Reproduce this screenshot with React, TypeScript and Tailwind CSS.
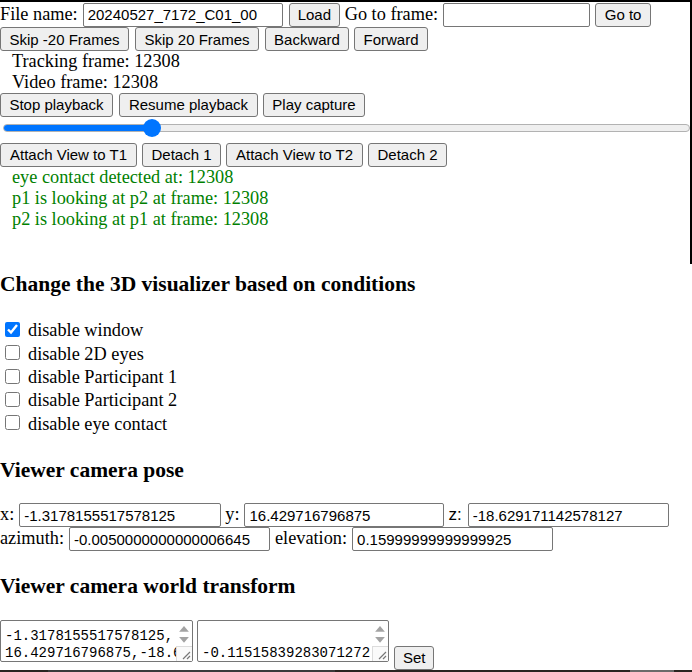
import React from 'react';

const serif = "font-['Liberation_Serif','Times_New_Roman',serif]";
const sans = "font-['Liberation_Sans',Arial,sans-serif]";
const btn = `h-[24px] px-[8px] bg-[#efefef] border border-[#767676] rounded-[3px] text-[15px] leading-none text-black whitespace-nowrap ${sans}`;
const field = `h-[24px] border border-[#767676] rounded-[2px] px-[4px] text-[15px] text-black bg-white outline-none ${sans}`;

function FakeTextarea({ value, width }: { value: string; width: string }) {
  return (
    <div className={`flex h-[42px] border border-[#767676] rounded-[2px] bg-white ${width}`}>
      <textarea
        readOnly
        value={value}
        wrap="off"
        className="flex-1 min-w-0 resize-none overflow-hidden border-0 outline-none pl-[4px] pt-[7px] text-[14px] leading-[17px] text-black font-['Liberation_Mono','DejaVu_Sans_Mono',monospace]"
      />
      <div className="w-[16px] flex flex-col items-center">
        <svg width="16" height="12" viewBox="0 0 16 12" className="mt-[2px]">
          <path d="M3 9 L8 3 L13 9 Z" fill="#a3a3a3" />
        </svg>
        <svg width="16" height="12" viewBox="0 0 16 12">
          <path d="M3 3 L8 9 L13 3 Z" fill="#a3a3a3" />
        </svg>
        <div className="mt-auto w-[16px] h-[15px] border-l border-t border-[#dcdcdc] bg-[#fafafa] flex items-end justify-end">
          <svg width="12" height="12" viewBox="0 0 12 12">
            <path d="M10 3 L3 10 M10 7 L7 10" stroke="#777" strokeWidth="1.2" />
          </svg>
        </div>
      </div>
    </div>
  );
}

export default function App() {
  const checks = [
    { label: 'disable window', on: true },
    { label: 'disable 2D eyes', on: false },
    { label: 'disable Participant 1', on: false },
    { label: 'disable Participant 2', on: false },
    { label: 'disable eye contact', on: false },
  ];

  return (
    <div className={`w-[692px] bg-white text-black text-[18.3px] ${serif}`}>
      {/* top panel */}
      <div className="h-[264px] border-t-2 border-r-2 border-black">
        <div className="flex items-center h-[25px] gap-[5px]">
          <span>File name:</span>
          <input readOnly value="20240527_7172_C01_00" className={`${field} w-[200px]`} />
          <button className={`${btn} ml-[1px] w-[51px]`}>Load</button>
          <span>Go to frame:</span>
          <input readOnly value="" className={`${field} w-[147px]`} />
          <button className={`${btn} w-[56px]`}>Go to</button>
        </div>

        <div className="flex items-center h-[24px] gap-[5px]">
          <button className={`${btn} w-[129px]`}>Skip -20 Frames</button>
          <button className={`${btn} ml-[1px] w-[124px]`}>Skip 20 Frames</button>
          <button className={`${btn} ml-[1px] w-[84px]`}>Backward</button>
          <button className={`${btn} w-[74px]`}>Forward</button>
        </div>

        <div className="pl-[12px] leading-[20.7px]">
          <div>Tracking frame: 12308</div>
          <div>Video frame: 12308</div>
        </div>

        <div className="flex items-center h-[25px] gap-[5px]">
          <button className={`${btn} w-[113px]`}>Stop playback</button>
          <button className={`${btn} ml-[1px] w-[139px]`}>Resume playback</button>
          <button className={`${btn} w-[102px]`}>Play capture</button>
        </div>

        <div className="h-[25px] pt-[2px] pl-[3px]">
          <div className="relative h-[18px] flex items-center">
            <div className="w-full h-[8px] rounded-full border border-[#b2b2b2] bg-[#efefef] overflow-hidden">
              <div className="w-[150px] h-full bg-[#0075ff]" />
            </div>
            <div className="absolute left-[140px] top-0 w-[18px] h-[18px] rounded-full bg-[#0075ff]" />
          </div>
        </div>

        <div className="flex items-center h-[25px] gap-[5px]">
          <button className={`${btn} w-[137px]`}>Attach View to T1</button>
          <button className={`${btn} w-[79px]`}>Detach 1</button>
          <button className={`${btn} w-[137px]`}>Attach View to T2</button>
          <button className={`${btn} w-[79px]`}>Detach 2</button>
        </div>

        <div className="pl-[12px] leading-[20.7px] text-[#008000]">
          <div>eye contact detected at: 12308</div>
          <div>p1 is looking at p2 at frame: 12308</div>
          <div>p2 is looking at p1 at frame: 12308</div>
        </div>
      </div>

      <h3 className="mt-[8px] text-[21.5px] leading-[24px] font-bold">Change the 3D visualizer based on conditions</h3>

      <div className="mt-[22px]">
        {checks.map((c) => (
          <label key={c.label} className="flex items-center h-[23.33px]">
            <input
              type="checkbox"
              defaultChecked={c.on}
              className="w-[15px] h-[15px] m-0 ml-[5px] mr-[8px] accent-[#0075ff]"
            />
            <span className="leading-[20.7px] pt-[2px]">{c.label}</span>
          </label>
        ))}
      </div>

      <h3 className="mt-[23.5px] text-[21.5px] leading-[24px] font-bold">Viewer camera pose</h3>

      <div className="mt-[21px]">
        <div className="flex items-center h-[24px] gap-[5px]">
          <span>x:</span>
          <input readOnly value="-1.3178155517578125" className={`${field} w-[202px]`} />
          <span className="ml-[-1px]">y:</span>
          <input readOnly value="16.429716796875" className={`${field} w-[200px]`} />
          <span className={`ml-[-1px] text-[17px] ${sans}`}>z:</span>
          <input readOnly value="-18.629171142578127" className={`${field} w-[201px] ml-[1px]`} />
        </div>
        <div className="flex items-center h-[24px] gap-[5px]">
          <span>azimuth:</span>
          <input readOnly value="-0.0050000000000006645" className={`${field} w-[201px]`} />
          <span>elevation:</span>
          <input readOnly value="0.15999999999999925" className={`${field} w-[201px]`} />
        </div>
      </div>

      <h3 className="mt-[22.5px] text-[21.5px] leading-[24px] font-bold">Viewer camera world transform</h3>

      <div className="mt-[22px] flex items-start gap-[4px]">
        <FakeTextarea width="w-[193px]" value={'-1.3178155517578125,\n16.429716796875,-18.629171142578127'} />
        <FakeTextarea width="w-[192px]" value={'\n-0.11515839283071272'} />
        <button className={`${btn} mt-[26px] h-[23px] w-[40px] ml-[1px]`}>Set</button>
      </div>

      <div className="flex h-[3px] bg-[#2a2420]">
        <div className="w-[48px]" />
        <div className="w-[287px] bg-[#3a3a3a]" />
        <div className="w-[295px]" />
        <div className="w-[44px] bg-[#6a6a6a]" />
      </div>
    </div>
  );
}
